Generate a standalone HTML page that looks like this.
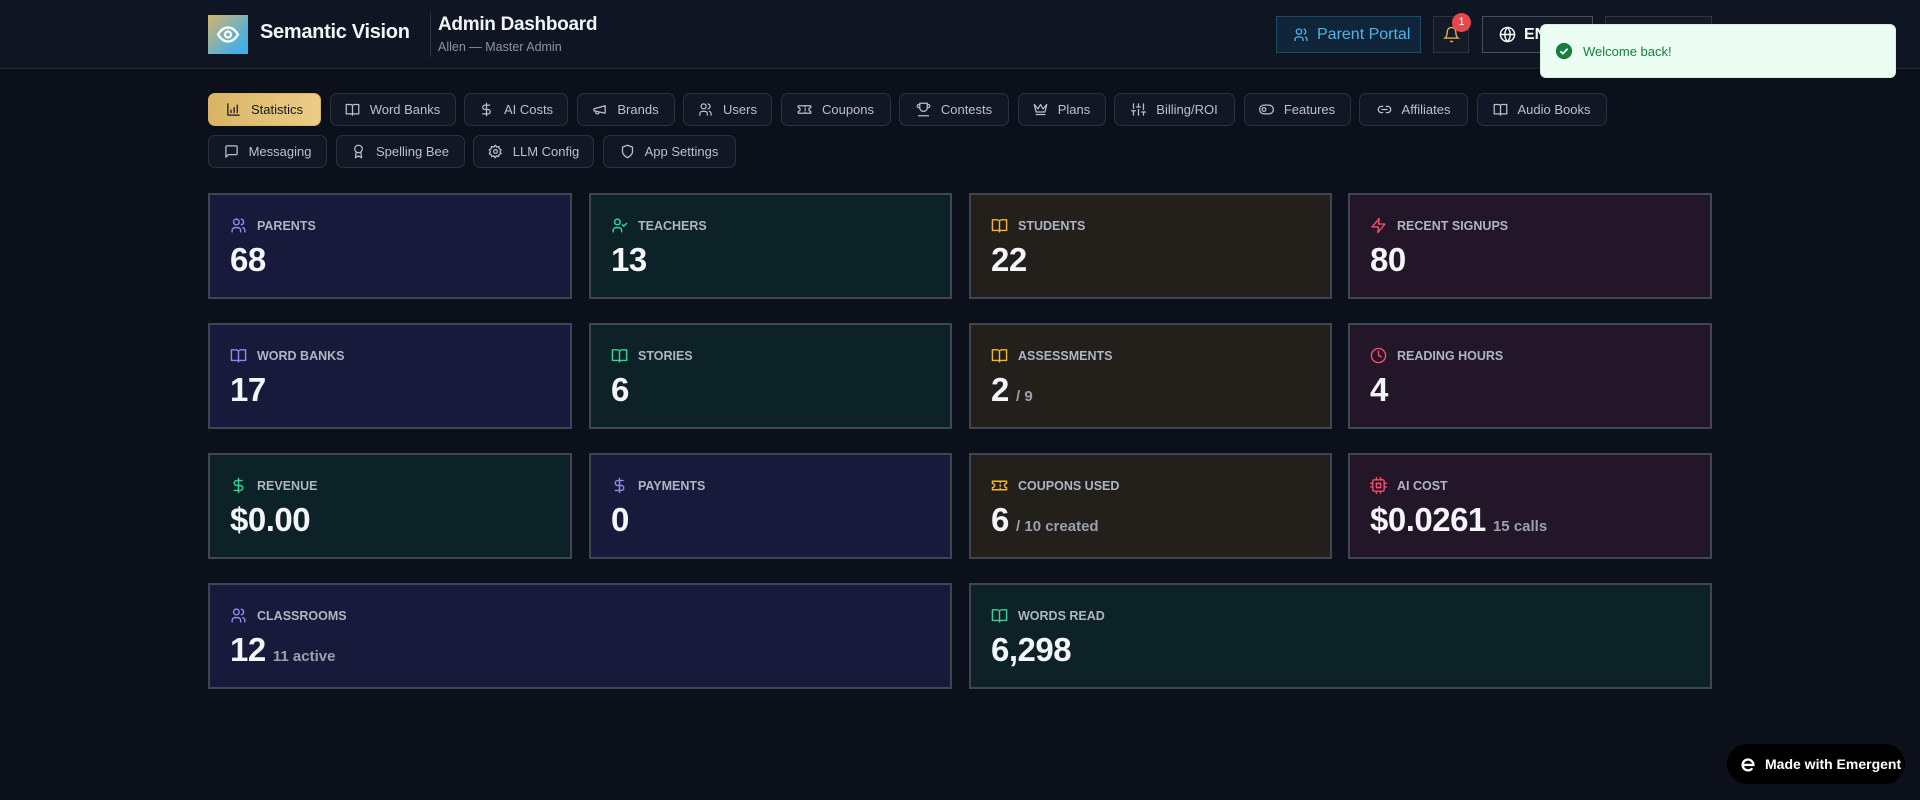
<!DOCTYPE html>
<html><head><meta charset="utf-8"><style>
*{box-sizing:border-box;margin:0;padding:0}
body{width:1920px;height:800px;overflow:hidden;background:#0b101b;font-family:"Liberation Sans",sans-serif;color:#fff;position:relative}
.hdr{position:absolute;left:0;top:0;width:1920px;height:69px;background:#0f1523;border-bottom:1px solid #232a38}
.logo{position:absolute;left:208px;top:15px;width:40px;height:39px;background:linear-gradient(135deg,#d6b56a,#56b0d8 70%,#3ab0e8)}
.brand{position:absolute;left:260px;top:21px;font-size:20px;font-weight:bold;color:#f2f4f8;letter-spacing:-.3px}
.div{position:absolute;left:430px;top:13px;width:1px;height:44px;background:#2c3342}
.t1{position:absolute;left:438px;top:14px;font-size:19px;font-weight:bold;color:#f2f4f8;letter-spacing:-.3px}
.t2{position:absolute;left:438px;top:40px;font-size:12.5px;color:#8a93a6}
.btn{position:absolute;top:16px;height:37px;border:1px solid #2d3545;background:#121a28;font-size:16px;display:flex;align-items:center;gap:8px;padding-left:16px;white-space:nowrap}
.tabs{position:absolute;left:208px;display:flex;gap:8.5px}
.tab{height:33px;border:1px solid #2a3141;border-radius:7px;background:#111725;display:flex;align-items:center;justify-content:center;gap:10px;font-size:13px;color:#b9c0ce;white-space:nowrap}
.tab svg{width:15px;height:15px;stroke:#b9c0ce;fill:none;stroke-width:2;stroke-linecap:round;stroke-linejoin:round}
.tab.on{background:linear-gradient(90deg,#d8b464,#eccd88);color:#1a1a1a;border-color:#d8b464}
.tab.on svg{stroke:#1a1a1a}
.card{position:absolute;border:2px solid #3f4553}
.card .l{position:absolute;left:20px;top:22px;display:flex;align-items:center;gap:10px;font-size:12.5px;font-weight:bold;color:#aeb5c3}
.card .l svg{width:17px;height:17px;fill:none;stroke-width:2;stroke-linecap:round;stroke-linejoin:round}
.card .n{position:absolute;left:20px;top:46px;font-size:33px;font-weight:bold;color:#f4f5f8;white-space:nowrap;letter-spacing:-.5px}
.card .n small{font-size:15px;color:#9aa1ae;font-weight:bold;margin-left:3px;letter-spacing:0}
.b{background:#171a3b}.g{background:#0d2227}.a{background:#231f1b}.r{background:#231628}
.b svg{stroke:#8b8cf0}.g svg{stroke:#34d399}.a svg{stroke:#f5b731}.r svg{stroke:#f0506e}
</style></head><body>
<div class="hdr">
<div class="logo"><svg width="40" height="39" viewBox="0 0 40 39"><path d="M10 19.5c3-5 6.5-7 10-7s7 2 10 7c-3 5-6.5 7-10 7s-7-2-10-7z" fill="none" stroke="#fff" stroke-width="2.2"/><circle cx="20" cy="19.5" r="3" fill="none" stroke="#fff" stroke-width="2.2"/></svg></div>
<div class="brand">Semantic Vision</div>
<div class="div"></div>
<div class="t1">Admin Dashboard</div>
<div class="t2">Allen — Master Admin</div>
<div class="btn" style="left:1276px;width:145px;color:#4fb3e8;background:#10253a;border-color:#1d4a66"><svg width="16" height="16" viewBox="0 0 24 24" fill="none" stroke="#4fb3e8" stroke-width="2"><circle cx="9" cy="7" r="4"/><path d="M3 21v-2a4 4 0 0 1 4-4h4a4 4 0 0 1 4 4v2M16 3.1a4 4 0 0 1 0 7.8M21 21v-2a4 4 0 0 0-3-3.9"/></svg>Parent Portal</div>
<div class="btn" style="left:1433px;width:36px;padding-left:9px;background:#141a26"><svg width="17" height="17" viewBox="0 0 24 24" fill="none" stroke="#e0b24a" stroke-width="2"><path d="M6 8a6 6 0 0 1 12 0c0 7 3 9 3 9H3s3-2 3-9M10.3 21a1.9 1.9 0 0 0 3.4 0"/></svg></div>
<div style="position:absolute;left:1452px;top:13px;width:19px;height:19px;border-radius:50%;background:#e5484d;font-size:11px;text-align:center;line-height:19px">1</div>
<div class="btn" style="left:1482px;width:111px;font-weight:bold;border-color:#4a4f5a"><svg width="17" height="17" viewBox="0 0 24 24" fill="none" stroke="#fff" stroke-width="2"><circle cx="12" cy="12" r="10"/><path d="M2 12h20M12 2a15 15 0 0 1 0 20M12 2a15 15 0 0 0 0 20"/></svg>ENG</div>
<div class="btn" style="left:1605px;width:107px"></div>
</div>
<div style="position:absolute;left:1540px;top:24px;width:356px;height:54px;background:#ecfdf3;border-radius:6px;border:1px solid #d2f4df;display:flex;align-items:center;padding-left:14px;gap:10px;font-size:13px;color:#16803c"><svg width="18" height="18" viewBox="0 0 20 20"><circle cx="10" cy="10" r="9" fill="#16803c"/><path d="M6 10.3l2.7 2.6L14 7.5" stroke="#fff" stroke-width="2" fill="none"/></svg>Welcome back!</div>

<div class="tabs" style="top:93px">
<div class="tab on" style="width:113px"><svg viewBox="0 0 24 24"><path d="M3 3v18h18M8 17v-4M13 17V9M18 17V5"/></svg>Statistics</div>
<div class="tab" style="width:126px"><svg viewBox="0 0 24 24"><path d="M2 4h7a3 3 0 0 1 3 3v14a2 2 0 0 0-2-2H2zM22 4h-7a3 3 0 0 0-3 3v14a2 2 0 0 1 2-2h8z"/></svg>Word Banks</div>
<div class="tab" style="width:104px"><svg viewBox="0 0 24 24"><path d="M12 2v20M17 5H9.5a3.5 3.5 0 0 0 0 7h5a3.5 3.5 0 0 1 0 7H6"/></svg>AI Costs</div>
<div class="tab" style="width:98px"><svg viewBox="0 0 24 24"><path d="M3 11l18-5v12L3 14zM11.6 16.8a3 3 0 1 1-5.8-1.6"/></svg>Brands</div>
<div class="tab" style="width:89px"><svg viewBox="0 0 24 24"><circle cx="9" cy="7" r="4"/><path d="M3 21v-2a4 4 0 0 1 4-4h4a4 4 0 0 1 4 4v2M16 3.1a4 4 0 0 1 0 7.8M21 21v-2a4 4 0 0 0-3-3.9"/></svg>Users</div>
<div class="tab" style="width:110px"><svg viewBox="0 0 24 24"><path d="M2 9a3 3 0 0 1 0 6v3h20v-3a3 3 0 0 1 0-6V6H2zM13 6v2M13 16v2M13 11v2"/></svg>Coupons</div>
<div class="tab" style="width:110px"><svg viewBox="0 0 24 24"><path d="M6 9H4.5a2.5 2.5 0 0 1 0-5H6M18 9h1.5a2.5 2.5 0 0 0 0-5H18M4 22h16M18 2H6v7a6 6 0 0 0 12 0z"/></svg>Contests</div>
<div class="tab" style="width:88px"><svg viewBox="0 0 24 24"><path d="M2 4l3 12h14l3-12-6 7-4-7-4 7zM5 20h14"/></svg>Plans</div>
<div class="tab" style="width:121px"><svg viewBox="0 0 24 24"><path d="M4 21v-7M4 10V3M12 21v-9M12 8V3M20 21v-5M20 12V3M1 14h6M9 8h6M17 16h6"/></svg>Billing/ROI</div>
<div class="tab" style="width:107px"><svg viewBox="0 0 24 24"><rect x="1" y="5" width="22" height="14" rx="7"/><circle cx="8" cy="12" r="3"/></svg>Features</div>
<div class="tab" style="width:109px"><svg viewBox="0 0 24 24"><path d="M9 17H7A5 5 0 0 1 7 7h2M15 7h2a5 5 0 0 1 0 10h-2M8 12h8"/></svg>Affiliates</div>
<div class="tab" style="width:130px"><svg viewBox="0 0 24 24"><path d="M2 4h7a3 3 0 0 1 3 3v14a2 2 0 0 0-2-2H2zM22 4h-7a3 3 0 0 0-3 3v14a2 2 0 0 1 2-2h8z"/></svg>Audio Books</div>
</div>
<div class="tabs" style="top:135px">
<div class="tab" style="width:119px"><svg viewBox="0 0 24 24"><path d="M21 15a2 2 0 0 1-2 2H7l-4 4V5a2 2 0 0 1 2-2h14a2 2 0 0 1 2 2z"/></svg>Messaging</div>
<div class="tab" style="width:129px"><svg viewBox="0 0 24 24"><circle cx="12" cy="8" r="6"/><path d="M8.2 13.9L7 22l5-3 5 3-1.2-8.1"/></svg>Spelling Bee</div>
<div class="tab" style="width:121px"><svg viewBox="0 0 24 24"><circle cx="12" cy="12" r="3"/><path d="M12 2l2 3 3.5-1 .5 3.5 3 2-2 3 2 3-3 1-1 3.5-3.5-1-2 3-2-3-3.5 1L5 17l-3-1.5 2-3-2-3 3-2L5.5 4 9 5z"/></svg>LLM Config</div>
<div class="tab" style="width:133px"><svg viewBox="0 0 24 24"><path d="M12 22s8-4 8-10V5l-8-3-8 3v7c0 6 8 10 8 10z"/></svg>App Settings</div>
</div>

<div class="card b" style="left:208px;top:193px;width:364px;height:106px"><div class="l"><svg viewBox="0 0 24 24"><circle cx="9" cy="7" r="4"/><path d="M3 21v-2a4 4 0 0 1 4-4h4a4 4 0 0 1 4 4v2M16 3.1a4 4 0 0 1 0 7.8M21 21v-2a4 4 0 0 0-3-3.9"/></svg>PARENTS</div><div class="n">68</div></div>
<div class="card g" style="left:589px;top:193px;width:363px;height:106px"><div class="l"><svg viewBox="0 0 24 24"><circle cx="9" cy="7" r="4"/><path d="M3 21v-2a4 4 0 0 1 4-4h4a4 4 0 0 1 4 4v2M16 11l2 2 4-4"/></svg>TEACHERS</div><div class="n">13</div></div>
<div class="card a" style="left:969px;top:193px;width:363px;height:106px"><div class="l"><svg viewBox="0 0 24 24"><path d="M2 4h7a3 3 0 0 1 3 3v14a2 2 0 0 0-2-2H2zM22 4h-7a3 3 0 0 0-3 3v14a2 2 0 0 1 2-2h8z"/></svg>STUDENTS</div><div class="n">22</div></div>
<div class="card r" style="left:1348px;top:193px;width:364px;height:106px"><div class="l"><svg viewBox="0 0 24 24"><path d="M13 2L3 14h9l-1 8 10-12h-9z"/></svg>RECENT SIGNUPS</div><div class="n">80</div></div>
<div class="card b" style="left:208px;top:323px;width:364px;height:106px"><div class="l"><svg viewBox="0 0 24 24"><path d="M2 4h7a3 3 0 0 1 3 3v14a2 2 0 0 0-2-2H2zM22 4h-7a3 3 0 0 0-3 3v14a2 2 0 0 1 2-2h8z"/></svg>WORD BANKS</div><div class="n">17</div></div>
<div class="card g" style="left:589px;top:323px;width:363px;height:106px"><div class="l"><svg viewBox="0 0 24 24"><path d="M2 4h7a3 3 0 0 1 3 3v14a2 2 0 0 0-2-2H2zM22 4h-7a3 3 0 0 0-3 3v14a2 2 0 0 1 2-2h8z"/></svg>STORIES</div><div class="n">6</div></div>
<div class="card a" style="left:969px;top:323px;width:363px;height:106px"><div class="l"><svg viewBox="0 0 24 24"><path d="M2 4h7a3 3 0 0 1 3 3v14a2 2 0 0 0-2-2H2zM22 4h-7a3 3 0 0 0-3 3v14a2 2 0 0 1 2-2h8z"/></svg>ASSESSMENTS</div><div class="n">2<small> / 9</small></div></div>
<div class="card r" style="left:1348px;top:323px;width:364px;height:106px"><div class="l"><svg viewBox="0 0 24 24"><circle cx="12" cy="12" r="10"/><path d="M12 6v6l4 2"/></svg>READING HOURS</div><div class="n">4</div></div>
<div class="card g" style="left:208px;top:453px;width:364px;height:106px"><div class="l"><svg viewBox="0 0 24 24"><path d="M12 2v20M17 5H9.5a3.5 3.5 0 0 0 0 7h5a3.5 3.5 0 0 1 0 7H6"/></svg>REVENUE</div><div class="n">$0.00</div></div>
<div class="card b" style="left:589px;top:453px;width:363px;height:106px"><div class="l"><svg viewBox="0 0 24 24"><path d="M12 2v20M17 5H9.5a3.5 3.5 0 0 0 0 7h5a3.5 3.5 0 0 1 0 7H6"/></svg>PAYMENTS</div><div class="n">0</div></div>
<div class="card a" style="left:969px;top:453px;width:363px;height:106px"><div class="l"><svg viewBox="0 0 24 24"><path d="M2 9a3 3 0 0 1 0 6v3h20v-3a3 3 0 0 1 0-6V6H2zM13 6v2M13 16v2M13 11v2"/></svg>COUPONS USED</div><div class="n">6<small> / 10 created</small></div></div>
<div class="card r" style="left:1348px;top:453px;width:364px;height:106px"><div class="l"><svg viewBox="0 0 24 24"><rect x="4" y="4" width="16" height="16" rx="2"/><rect x="9" y="9" width="6" height="6"/><path d="M9 1v3M15 1v3M9 20v3M15 20v3M20 9h3M20 14h3M1 9h3M1 14h3"/></svg>AI COST</div><div class="n">$0.0261<small> 15 calls</small></div></div>
<div class="card b" style="left:208px;top:583px;width:744px;height:106px"><div class="l"><svg viewBox="0 0 24 24"><circle cx="9" cy="7" r="4"/><path d="M3 21v-2a4 4 0 0 1 4-4h4a4 4 0 0 1 4 4v2M16 3.1a4 4 0 0 1 0 7.8M21 21v-2a4 4 0 0 0-3-3.9"/></svg>CLASSROOMS</div><div class="n">12<small> 11 active</small></div></div>
<div class="card g" style="left:969px;top:583px;width:743px;height:106px"><div class="l"><svg viewBox="0 0 24 24"><path d="M2 4h7a3 3 0 0 1 3 3v14a2 2 0 0 0-2-2H2zM22 4h-7a3 3 0 0 0-3 3v14a2 2 0 0 1 2-2h8z"/></svg>WORDS READ</div><div class="n">6,298</div></div>

<div style="position:absolute;left:1727px;top:744px;width:178px;height:40px;border-radius:20px;background:#000;display:flex;align-items:center;padding-left:12px;gap:8px;font-size:14px;font-weight:bold;color:#fff;white-space:nowrap"><svg width="18" height="18" viewBox="0 0 20 20" fill="none" stroke="#fff" stroke-width="2.6" stroke-linecap="round"><path d="M4 11h12a6 6 0 1 0-2 4.5"/></svg>Made with Emergent</div>
</body></html>
